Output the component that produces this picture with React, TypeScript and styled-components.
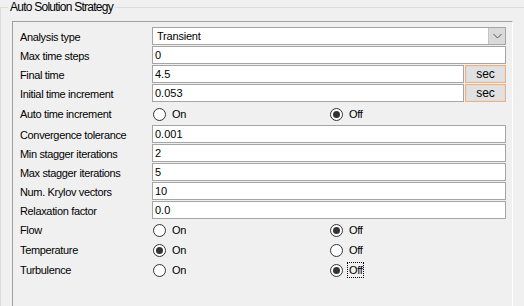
import React from "react";
import styled, { createGlobalStyle } from "styled-components";

const GlobalStyle = createGlobalStyle`
    html, body {
        margin: 0;
        padding: 0;
        background: #f0f0f0;
        overflow: hidden;
    }
    body {
        width: 524px;
        height: 306px;
        font-family: "Liberation Sans", Arial, sans-serif;
        font-size: 11px;
        letter-spacing: -0.35px;
        color: #000;
    }
`

const GroupBox = styled.fieldset`
    margin: 0;
    padding: 7px 0 0 11px;
    width: 540px;
    height: 340px;
    border: 1px solid #dcdcdc;
    box-sizing: border-box;
`

const GroupTitle = styled.legend`
    font-size: 12px;
    letter-spacing: -0.75px;
    padding: 0 2px;
    margin-left: -4px;
    line-height: 14px;
`

const Panel = styled.div`
    width: 501px;
    height: 320px;
    box-sizing: border-box;
    border-top: 1px solid #a0a0a0;
    border-left: 1px solid #a0a0a0;
    border-right: 1px solid #ffffff;
    border-bottom: 1px solid #ffffff;
    padding: 5px 0 0 7px;
`

const FormGrid = styled.div`
    display: grid;
    grid-template-columns: 132px 354px;
`

interface IRow {
    tall?: boolean;
}

const Label = styled.div<IRow>`
    height: ${(props) => (props.tall ? "20px" : "19px")};
    display: flex;
    align-items: center;
    white-space: nowrap;
`

const Cell = styled.div<IRow>`
    height: ${(props) => (props.tall ? "20px" : "19px")};
    display: flex;
    align-items: flex-start;
    gap: 1px;
`

const TextBox = styled.div`
    flex: 1;
    height: 18px;
    box-sizing: border-box;
    background: #ffffff;
    border: 1px solid #a5a5a5;
    padding: 0 0 0 2px;
    line-height: 16px;
    letter-spacing: 0;
`

const Combo = styled.div`
    flex: 1;
    height: 18px;
    box-sizing: border-box;
    background: #ffffff;
    border: 1px solid #a5a5a5;
    display: flex;
    align-items: stretch;
    justify-content: space-between;
`

const ComboText = styled.span`
    padding-left: 4px;
    line-height: 16px;
    letter-spacing: -0.2px;
`

const ComboButton = styled.div`
    width: 16px;
    background: #dadada;
    border-left: 1px solid #c4c4c4;
    display: flex;
    align-items: center;
    justify-content: center;
`

const UnitButton = styled.div`
    width: 41px;
    height: 18px;
    box-sizing: border-box;
    background: #e1e1e1;
    border: 1px solid #f2b07a;
    box-shadow: inset 0 0 0 1px #dcdcdc;
    display: flex;
    align-items: center;
    justify-content: center;
    font-size: 12px;
    letter-spacing: 0;
`

const RadioGroup = styled.div`
    display: flex;
    align-items: center;
    height: 100%;
    padding-left: 1px;
`

const RadioOption = styled.label`
    width: 177px;
    display: flex;
    align-items: center;
    gap: 6px;
`

const RadioCircle = styled.span<{ checked: boolean }>`
    width: 13px;
    height: 13px;
    box-sizing: border-box;
    border-radius: 50%;
    border: 1px solid #333333;
    background: #ffffff;
    display: flex;
    align-items: center;
    justify-content: center;
    &::after {
        content: "";
        width: 7px;
        height: 7px;
        border-radius: 50%;
        background: ${(props) => (props.checked ? "#333333" : "transparent")};
    }
`

const RadioText = styled.span<{ focused?: boolean }>`
    border: 1px dotted ${(props) => (props.focused ? "#000" : "transparent")};
    padding: 1px 1px;
    margin-left: -2px;
`

type Field =
    | { kind: "combo"; label: string; value: string }
    | { kind: "text"; label: string; value: string; unit?: string }
    | { kind: "radio"; label: string; on: boolean; focus?: boolean };

const fields: Field[] = [
    { kind: "combo", label: "Analysis type", value: "Transient" },
    { kind: "text", label: "Max time steps", value: "0" },
    { kind: "text", label: "Final time", value: "4.5", unit: "sec" },
    { kind: "text", label: "Initial time increment", value: "0.053", unit: "sec" },
    { kind: "radio", label: "Auto time increment", on: false },
    { kind: "text", label: "Convergence tolerance", value: "0.001" },
    { kind: "text", label: "Min stagger iterations", value: "2" },
    { kind: "text", label: "Max stagger iterations", value: "5" },
    { kind: "text", label: "Num. Krylov vectors", value: "10" },
    { kind: "text", label: "Relaxation factor", value: "0.0" },
    { kind: "radio", label: "Flow", on: false },
    { kind: "radio", label: "Temperature", on: true },
    { kind: "radio", label: "Turbulence", on: false, focus: true },
];

const AutoRow = styled.div`
    display: contents;
    & > div {
        height: 22px;
    }
`

function Chevron() {
    return (
        <svg width="9" height="6" viewBox="0 0 9 6">
            <path d="M0.5 1 L4.5 5 L8.5 1" fill="none" stroke="#555" strokeWidth="1" />
        </svg>
    );
}

function RadioPair({ on, focus }: { on: boolean; focus?: boolean }) {
    return (
        <RadioGroup>
            <RadioOption>
                <RadioCircle checked={on} />
                <RadioText>On</RadioText>
            </RadioOption>
            <RadioOption>
                <RadioCircle checked={!on} />
                <RadioText focused={focus}>Off</RadioText>
            </RadioOption>
        </RadioGroup>
    );
}

function renderControl(f: Field) {
    if (f.kind === "combo") {
        return (
            <Combo>
                <ComboText>{f.value}</ComboText>
                <ComboButton>
                    <Chevron />
                </ComboButton>
            </Combo>
        );
    }
    if (f.kind === "text") {
        return (
            <>
                <TextBox>{f.value}</TextBox>
                {f.unit && <UnitButton>{f.unit}</UnitButton>}
            </>
        );
    }
    return <RadioPair on={f.on} focus={f.focus} />;
}

function App() {
    return (
        <>
            <GlobalStyle />
            <GroupBox>
                <GroupTitle>Auto Solution Strategy</GroupTitle>
                <Panel>
                    <FormGrid>
                        {fields.map((f, i) => {
                            const isRadio = f.kind === "radio";
                            if (i === 4) {
                                return (
                                    <AutoRow key={f.label}>
                                        <Label tall>{f.label}</Label>
                                        <Cell tall>{renderControl(f)}</Cell>
                                    </AutoRow>
                                );
                            }
                            return (
                                <React.Fragment key={f.label}>
                                    <Label tall={isRadio}>{f.label}</Label>
                                    <Cell tall={isRadio}>{renderControl(f)}</Cell>
                                </React.Fragment>
                            );
                        })}
                    </FormGrid>
                </Panel>
            </GroupBox>
        </>
    );
}

export default App;
